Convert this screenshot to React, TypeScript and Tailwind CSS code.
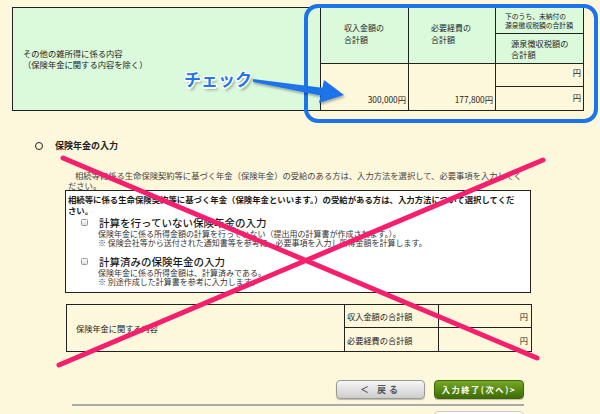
import React from 'react'

const cream = 'bg-[#fdf7dc]'

// 上段：その他の雑所得の表
const IncomeTable: React.FC = () => (
  <div className="ml-[12px] mt-[7px] flex h-[104px] w-[572px] border border-[#222]">
    <div className="flex w-[308px] items-center border-r border-[#222] bg-[#dbf9db] pl-[10px] text-[8.3px] leading-[11px] text-[#222]">
      <div>
        その他の雑所得に係る内容
        <br />
        （保険年金に関する内容を除く）
      </div>
    </div>
    <div className="flex flex-1 flex-col">
      <div className="flex h-[56px] border-b border-[#222] text-[#222]">
        <div className="flex w-[88px] flex-col justify-center border-r border-[#222] bg-[#dbf9db] pb-[3px] pl-[23px] text-[8px] leading-[12px]">
          <div>収入金額の</div>
          <div>合計額</div>
        </div>
        <div className="flex w-[87px] flex-col justify-center border-r border-[#222] bg-[#dbf9db] pb-[3px] pl-[22px] text-[8px] leading-[12px]">
          <div>必要経費の</div>
          <div>合計額</div>
        </div>
        <div className="flex flex-1 flex-col">
          <div className="flex h-[26px] flex-col justify-center border-b border-[#222] bg-[#dbf9db] pl-[9px] text-[6.8px] leading-[9px]">
            <div>下のうち、未納付の</div>
            <div>源泉徴収税額の合計額</div>
          </div>
          <div className="flex flex-1 flex-col justify-center bg-[#dbf9db] pl-[15px] text-[8.2px] leading-[11px]">
            <div>源泉徴収税額の</div>
            <div>合計額</div>
          </div>
        </div>
      </div>
      <div className={`flex flex-1 text-[8.3px] leading-[10px] text-[#222] ${cream}`}>
        <div className="flex w-[88px] items-end justify-end border-r border-[#222] pb-[6px] pr-[2px]">300,000円</div>
        <div className="flex w-[87px] items-end justify-end border-r border-[#222] pb-[6px] pr-[2px]">177,800円</div>
        <div className="flex flex-1 flex-col">
          <div className="flex h-[23px] justify-end border-b border-[#222] pr-[2px] pt-[3px]">円</div>
          <div className="flex flex-1 justify-end pr-[2px] pt-[5px]">円</div>
        </div>
      </div>
    </div>
  </div>
)

const Checkbox: React.FC = () => (
  <div className="h-[7px] w-[7px] shrink-0 rounded-[1.5px] border border-[#999] bg-linear-to-b from-[#fff] to-[#ddd]" />
)

// 保険年金の入力方法の選択
const MethodBox: React.FC = () => (
  <div className="ml-[65px] h-[103px] w-[466px] border border-[#222] bg-white pl-[2px] pt-[3px] text-[#222]">
    <div className="whitespace-nowrap text-[8.4px] font-bold leading-[11px] text-[#1a1a1a]">
      相続等に係る生命保険契約等に基づく年金（保険年金といいます。）の受給がある方は、入力方法について選択してくだ
      <br />
      さい。
    </div>
    <div className="pl-[13px]">
      <div className="flex h-[13px] items-center">
        <Checkbox />
        <span className="ml-[11px] text-[10.5px] font-medium leading-[13px] text-[#1a1a1a]">計算を行っていない保険年金の入力</span>
      </div>
      <div className="whitespace-nowrap pl-[17px] text-[8px] leading-[9px] text-[#333]">
        <div>保険年金に係る所得金額の計算を行っていない（提出用の計算書が作成されます。）。</div>
        <div>※ 保険会社等から送付された通知書等を参考に、必要事項を入力し所得金額を計算します。</div>
      </div>
      <div className="mt-[8px] flex h-[13px] items-center">
        <Checkbox />
        <span className="ml-[11px] text-[10.5px] font-medium leading-[13px] text-[#1a1a1a]">計算済みの保険年金の入力</span>
      </div>
      <div className="whitespace-nowrap pl-[17px] text-[8px] leading-[9px] text-[#333]">
        <div>保険年金に係る所得金額は、計算済みである。</div>
        <div>※ 別途作成した計算書を参考に入力します。</div>
      </div>
    </div>
  </div>
)

const PensionTable: React.FC = () => (
  <div className="ml-[66px] mt-[11px] flex h-[48px] w-[466px] border border-[#222] text-[8.2px] leading-[10px] text-[#222]">
    <div className="flex w-[278px] items-center border-r border-[#222] pl-[9px]">保険年金に関する内容</div>
    <div className="grid flex-1 grid-cols-[94px_1fr] grid-rows-2">
      <div className="flex items-center border-b border-r border-[#222] pl-[2px]">収入金額の合計額</div>
      <div className="flex items-center justify-end border-b border-[#222] pr-[3px]">円</div>
      <div className="flex items-center border-r border-[#222] pl-[2px]">必要経費の合計額</div>
      <div className="flex items-center justify-end pr-[3px]">円</div>
    </div>
  </div>
)

export default function App() {
  return (
    <div
      className={`relative h-[414px] w-[600px] overflow-hidden ${cream}`}
      style={{ fontFamily: '"Noto Sans CJK JP", "Noto Sans", sans-serif' }}
    >
      <IncomeTable />

      <div className="ml-[35px] mt-[29px] flex h-[12px] items-center">
        <div className="h-[8px] w-[8px] rounded-full border-[1.5px] border-[#222]" />
        <span className="ml-[12px] text-[9px] font-bold text-[#222]">保険年金の入力</span>
      </div>

      <div className="mt-[18px] h-[20px] whitespace-nowrap pl-[68px] text-[8.3px] leading-[10px] text-[#444]">
        <div className="indent-[7px]">
          相続等に係る生命保険契約等に基づく年金（保険年金）の受給のある方は、入力方法を選択して、必要事項を入力してく
        </div>
        <div>ださい。</div>
      </div>

      <MethodBox />
      <PensionTable />

      <div className="ml-[336px] mt-[28px] flex gap-[9px]">
        <button className="flex h-[19px] w-[89px] items-center justify-center rounded-[4px] border border-[#999] bg-linear-to-b from-[#f6f6f6] to-[#cdcdcd] text-[9px] font-bold tracking-[3px] text-[#555] shadow-[0_1px_1px_rgba(0,0,0,0.25)]">
          ＜ 戻る
        </button>
        <button className="flex h-[19px] w-[90px] items-center justify-center rounded-[4px] border border-[#3d6606] bg-linear-to-b from-[#77a824] to-[#3e6c07] text-[8.2px] font-bold tracking-[1.6px] text-white shadow-[0_1px_1px_rgba(0,0,0,0.25)]">
          入力終了(次へ)&gt;
        </button>
      </div>

      <div className="ml-[72px] mt-[5px] h-[2px] w-[452px] bg-[#aaa]" />
      <div className="ml-[434px] mt-[5px] h-[12px] w-[90px] rounded-[4px] border border-[#ccc] bg-white" />

      {/* 注記のオーバーレイ */}
      <div className="absolute left-[304px] top-[4px] h-[119px] w-[294px] rounded-[14px] border-[4px] border-[#1d73ea]" />
      <svg className="absolute left-0 top-0" width="600" height="414" viewBox="0 0 600 414">
        <defs>
          <filter id="sh" x="-20%" y="-50%" width="140%" height="200%">
            <feDropShadow dx="1" dy="2" stdDeviation="1.2" floodColor="#000" floodOpacity="0.3" />
          </filter>
        </defs>
        <g filter="url(#sh)" fill="#1d73ea">
          <polygon points="253,79 324,88 323,96 253,82" />
          <polygon points="324,80 344,95 319,103" />
        </g>
        <g stroke="#f61f6d" strokeWidth="5" strokeLinecap="round">
          <line x1="63" y1="158" x2="537" y2="358" />
          <line x1="543" y1="160" x2="59" y2="365" />
        </g>
      </svg>
      <div className="absolute left-[184px] top-[69px] text-[17px] font-bold leading-[20px] text-[#1f78ee] [text-shadow:1.5px_0_0_#fff,-1.5px_0_0_#fff,0_1.5px_0_#fff,0_-1.5px_0_#fff,1px_1px_0_#fff,-1px_-1px_0_#fff,1px_-1px_0_#fff,-1px_1px_0_#fff,2px_3px_3px_rgba(0,0,0,0.35)]">
        チェック
      </div>
    </div>
  )
}
